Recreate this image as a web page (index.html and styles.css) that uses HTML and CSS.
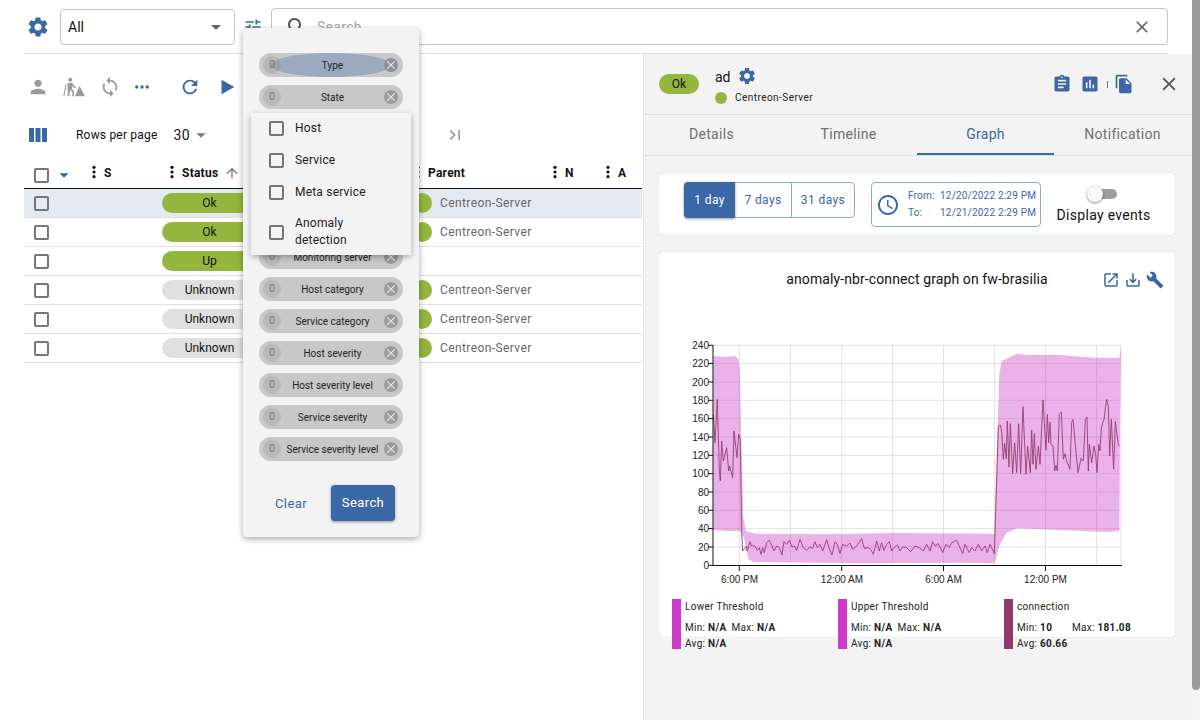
FILE: index.html
```html
<!DOCTYPE html>
<html lang="en">
<head>
  <meta charset="UTF-8">
  <title>Resources status</title>
  <link rel="stylesheet" href="styles.css">
</head>
<body>

<svg class="icon-defs" width="0" height="0">
  <defs>
    <symbol id="i-gear" viewBox="0 0 24 24"><path d="M19.14 12.94c.04-.3.06-.61.06-.94 0-.32-.02-.64-.07-.94l2.03-1.58c.18-.14.23-.41.12-.61l-1.92-3.32c-.12-.22-.37-.29-.59-.22l-2.39.96c-.5-.38-1.03-.7-1.62-.94l-.36-2.54c-.04-.24-.24-.41-.48-.41h-3.84c-.24 0-.43.17-.47.41l-.36 2.54c-.59.24-1.13.57-1.62.94l-2.39-.96c-.22-.08-.47 0-.59.22L2.74 8.87c-.12.21-.08.47.12.61l2.03 1.58c-.05.3-.09.63-.09.94s.02.64.07.94l-2.03 1.58c-.18.14-.23.41-.12.61l1.92 3.32c.12.22.37.29.59.22l2.39-.96c.5.38 1.03.7 1.62.94l.36 2.54c.05.24.24.41.48.41h3.84c.24 0 .44-.17.47-.41l.36-2.54c.59-.24 1.13-.56 1.62-.94l2.39.96c.22.08.47 0 .59-.22l1.92-3.32c.12-.22.07-.47-.12-.61l-2.01-1.58zM12 15.6c-1.98 0-3.6-1.62-3.6-3.6s1.62-3.6 3.6-3.6 3.6 1.62 3.6 3.6-1.62 3.6-3.6 3.6z"/></symbol>
    <symbol id="i-close" viewBox="0 0 24 24"><path d="M19 6.41L17.59 5 12 10.59 6.41 5 5 6.41 10.59 12 5 17.59 6.41 19 12 13.41 17.59 19 19 17.59 13.41 12z"/></symbol>
    <symbol id="i-more-vert" viewBox="0 0 24 24"><circle cx="12" cy="5" r="2.4"/><circle cx="12" cy="12" r="2.4"/><circle cx="12" cy="19" r="2.4"/></symbol>
    <symbol id="i-caret" viewBox="0 0 24 24"><path d="M7 10l5 5 5-5z"/></symbol>
  </defs>
</svg>

<div class="page">
  <div class="topbar">
    <svg class="icon gear-main"><use href="#i-gear"/></svg>
    <div class="filter-select">
      <span>All</span>
      <svg class="icon caret"><use href="#i-caret"/></svg>
    </div>
    <svg class="icon tune" viewBox="0 0 24 24"><path d="M3 17v2h6v-2H3zM3 5v2h10V5H3zm10 16v-2h8v-2h-8v-2h-2v6h2zM7 9v2H3v2h4v2h2V9H7zm14 4v-2H11v2h10zm-6-4h2V7h4V5h-4V3h-2v6z"/></svg>
    <div class="search-box">
      <svg class="icon search-icon" viewBox="0 0 24 24"><path d="M15.5 14h-.79l-.28-.27C15.41 12.59 16 11.11 16 9.5 16 5.91 13.09 3 9.5 3S3 5.91 3 9.5 5.91 16 9.5 16c1.61 0 3.09-.59 4.23-1.57l.27.28v.79l5 4.99L20.49 19l-4.99-5zm-6 0C7.01 14 5 11.99 5 9.5S7.01 5 9.5 5 14 7.01 14 9.5 11.99 14 9.5 14z"/></svg>
      <span class="search-text">Search</span>
      <svg class="icon search-clear"><use href="#i-close"/></svg>
    </div>
  </div>

  <div class="content">
    <div class="list">
      <div class="toolbar">
        <svg class="icon tool tool-person" viewBox="0 0 24 24"><path d="M12 12c2.21 0 4-1.79 4-4s-1.79-4-4-4-4 1.79-4 4 1.79 4 4 4zm0 2c-2.67 0-8 1.34-8 4v2h16v-2c0-2.66-5.33-4-8-4z"/></svg>
        <svg class="icon tool tool-road" viewBox="0 0 24 24"><circle cx="8" cy="4" r="2.2"/><path d="M5 8l5-.6 2.2 3.6 2 .8-.5 1.4-2.8-1-.9-1.4-.4 3 2.4 2.6V22h-1.8v-4.6L7.6 15 7 22H5.2zM3.8 9L1.5 22H.4L2.7 8.8zM18 10.5L24 22H13z"/></svg>
        <svg class="icon tool tool-sync" viewBox="0 0 24 24"><path d="M12 4V1L8 5l4 4V6c3.31 0 6 2.69 6 6 0 1.01-.25 1.97-.7 2.8l1.46 1.46C19.54 15.03 20 13.57 20 12c0-4.42-3.58-8-8-8zm0 14c-3.31 0-6-2.69-6-6 0-1.01.25-1.97.7-2.8L5.24 7.74C4.46 8.97 4 10.43 4 12c0 4.42 3.58 8 8 8v3l4-4-4-4v3z"/></svg>
        <svg class="icon tool tool-more" viewBox="0 0 24 24"><circle cx="5" cy="12" r="2.2"/><circle cx="12" cy="12" r="2.2"/><circle cx="19" cy="12" r="2.2"/></svg>
        <svg class="icon tool tool-refresh" viewBox="0 0 24 24"><path d="M17.65 6.35C16.2 4.9 14.21 4 12 4c-4.42 0-7.99 3.58-7.99 8s3.57 8 7.99 8c3.73 0 6.84-2.55 7.73-6h-2.08c-.82 2.33-3.04 4-5.65 4-3.31 0-6-2.69-6-6s2.69-6 6-6c1.66 0 3.14.69 4.22 1.78L13 11h7V4l-2.35 2.35z"/></svg>
        <svg class="icon tool tool-play" viewBox="0 0 24 24"><path d="M6 4v16l14-8z"/></svg>
      </div>

      <div class="pager">
        <svg class="icon columns-icon" viewBox="0 0 18 14"><path d="M0 0h5v14H0zM6.5 0h5v14h-5zM13 0h5v14h-5z"/></svg>
        <span class="rows-label">Rows per page</span>
        <span class="rows-value">30</span>
        <svg class="icon rows-caret"><use href="#i-caret"/></svg>
        <svg class="icon last-page" viewBox="0 0 24 24"><path d="M5.59 7.41L10.18 12l-4.59 4.59L7 18l6-6-6-6zM16 6h2v12h-2z"/></svg>
      </div>

      <div class="table">
        <div class="thead">
          <div class="cell cell-select">
            <span class="check"></span>
            <svg class="icon select-caret"><use href="#i-caret"/></svg>
          </div>
          <div class="cell th"><svg class="icon dots"><use href="#i-more-vert"/></svg>S</div>
          <div class="cell th th-status"><svg class="icon dots"><use href="#i-more-vert"/></svg>Status
            <svg class="icon sort-up" viewBox="0 0 24 24"><path d="M4 12l1.41 1.41L11 7.83V20h2V7.83l5.58 5.59L20 12l-8-8-8 8z"/></svg>
          </div>
          <div class="cell th th-right"><svg class="icon dots"><use href="#i-more-vert"/></svg>Parent</div>
          <div class="cell th th-right"><svg class="icon dots"><use href="#i-more-vert"/></svg>N</div>
          <div class="cell th th-right"><svg class="icon dots"><use href="#i-more-vert"/></svg>A</div>
        </div>

        <div class="row selected">
          <div class="cell"><span class="check"></span></div><div class="cell"></div>
          <div class="cell"><span class="status ok">Ok</span></div>
          <div class="cell parent"><i class="dot"></i>Centreon-Server</div><div class="cell"></div><div class="cell"></div>
        </div>
        <div class="row">
          <div class="cell"><span class="check"></span></div><div class="cell"></div>
          <div class="cell"><span class="status ok">Ok</span></div>
          <div class="cell parent"><i class="dot"></i>Centreon-Server</div><div class="cell"></div><div class="cell"></div>
        </div>
        <div class="row">
          <div class="cell"><span class="check"></span></div><div class="cell"></div>
          <div class="cell"><span class="status ok">Up</span></div>
          <div class="cell parent"></div><div class="cell"></div><div class="cell"></div>
        </div>
        <div class="row">
          <div class="cell"><span class="check"></span></div><div class="cell"></div>
          <div class="cell"><span class="status unknown">Unknown</span></div>
          <div class="cell parent"><i class="dot"></i>Centreon-Server</div><div class="cell"></div><div class="cell"></div>
        </div>
        <div class="row">
          <div class="cell"><span class="check"></span></div><div class="cell"></div>
          <div class="cell"><span class="status unknown">Unknown</span></div>
          <div class="cell parent"><i class="dot"></i>Centreon-Server</div><div class="cell"></div><div class="cell"></div>
        </div>
        <div class="row">
          <div class="cell"><span class="check"></span></div><div class="cell"></div>
          <div class="cell"><span class="status unknown">Unknown</span></div>
          <div class="cell parent"><i class="dot"></i>Centreon-Server</div><div class="cell"></div><div class="cell"></div>
        </div>
      </div>
    </div>

    <div class="panel">
      <div class="panel-header">
        <span class="panel-status">Ok</span>
        <div class="panel-title">
          <div class="panel-name">ad <svg class="icon panel-gear"><use href="#i-gear"/></svg></div>
          <div class="panel-parent"><i class="dot-small"></i>Centreon-Server</div>
        </div>
        <div class="panel-actions">
          <svg class="icon action" viewBox="0 0 24 24"><path d="M19 3h-4.18C14.4 1.84 13.3 1 12 1c-1.3 0-2.4.84-2.82 2H5c-1.1 0-2 .9-2 2v14c0 1.1.9 2 2 2h14c1.1 0 2-.9 2-2V5c0-1.1-.9-2-2-2zm-7 0c.55 0 1 .45 1 1s-.45 1-1 1-1-.45-1-1 .45-1 1-1zm2 14H7v-2h7v2zm3-4H7v-2h10v2zm0-4H7V7h10v2z"/></svg>
          <svg class="icon action" viewBox="0 0 24 24"><path d="M19 3H5c-1.1 0-2 .9-2 2v14c0 1.1.9 2 2 2h14c1.1 0 2-.9 2-2V5c0-1.1-.9-2-2-2zM9 17H7v-7h2v7zm4 0h-2V7h2v10zm4 0h-2v-4h2v4z"/></svg>
          <span class="action-sep"></span>
          <svg class="icon action" viewBox="0 0 24 24"><path d="M16 1H4c-1.1 0-2 .9-2 2v14h2V3h12V1zm-1 4l6 6v10c0 1.1-.9 2-2 2H7.99C6.89 23 6 22.1 6 21l.01-14c0-1.1.89-2 1.99-2h7zm-1 7h5.5L14 6.5V12z"/></svg>
        </div>
        <svg class="icon panel-close"><use href="#i-close"/></svg>
      </div>

      <div class="tabs">
        <div class="tab">Details</div>
        <div class="tab">Timeline</div>
        <div class="tab active">Graph</div>
        <div class="tab">Notification</div>
      </div>

      <div class="panel-body">
        <div class="card time-card">
          <div class="periods">
            <span class="period active">1 day</span>
            <span class="period period-7">7 days</span>
            <span class="period period-31">31 days</span>
          </div>
          <div class="range">
            <svg class="icon clock" viewBox="0 0 24 24"><path d="M11.99 2C6.47 2 2 6.48 2 12s4.47 10 9.99 10C17.52 22 22 17.52 22 12S17.52 2 11.99 2zM12 20c-4.42 0-8-3.58-8-8s3.58-8 8-8 8 3.58 8 8-3.58 8-8 8zm.5-13H11v6l5.25 3.15.75-1.23-4.5-2.67z"/></svg>
            <div class="range-grid">
              <span>From:</span><span>12/20/2022 2:29 PM</span>
              <span>To:</span><span>12/21/2022 2:29 PM</span>
            </div>
          </div>
          <div class="events">
            <span class="switch"><i class="switch-knob"></i></span>
            <span class="events-label">Display events</span>
          </div>
        </div>

        <div class="card graph-card">
          <div class="graph-head">
            <span class="graph-title">anomaly-nbr-connect graph on fw-brasilia</span>
            <div class="graph-actions">
              <svg class="icon graph-action" viewBox="0 0 24 24"><path d="M19 19H5V5h7V3H5c-1.11 0-2 .9-2 2v14c0 1.1.89 2 2 2h14c1.1 0 2-.9 2-2v-7h-2v7zM14 3v2h3.59l-9.83 9.83 1.41 1.41L19 6.41V10h2V3h-7z"/></svg>
              <svg class="icon graph-action" viewBox="0 0 24 24"><path d="M19 12v7H5v-7H3v7c0 1.1.9 2 2 2h14c1.1 0 2-.9 2-2v-7h-2zm-6 .67l2.59-2.58L17 11.5l-5 5-5-5 1.41-1.41L11 12.67V3h2z"/></svg>
              <svg class="icon graph-action" viewBox="0 0 24 24"><path d="M22.7 19l-9.1-9.1c.9-2.3.4-5-1.5-6.9-2-2-5-2.4-7.4-1.3L9 6 6 9 1.6 4.7C.4 7.1.9 10.1 2.9 12.1c1.9 1.9 4.6 2.4 6.9 1.5l9.1 9.1c.4.4 1 .4 1.4 0l2.3-2.3c.5-.4.5-1.1.1-1.4z"/></svg>
            </div>
          </div>

          <svg class="chart" width="516" height="264" viewBox="659 330 516 264">
            <path class="grid" d="M713 344.3H1121M713 362.6H1121M713 381H1121M713 399.3H1121M713 417.6H1121M713 436H1121M713 454.3H1121M713 472.6H1121M713 491H1121M713 509.3H1121M713 527.6H1121M713 546H1121M739.3 344V564M790.5 344V564M841.7 344V564M892.6 344V564M943.5 344V564M994.7 344V564M1045.5 344V564M1096.6 344V564M1121 344V564"/>
            <g transform="translate(660 330) scale(.33333)">
              <polygon class="band" points="160,75 200,78 225,75 235,85 240,130 243,300 250,560 258,600 285,608 500,610 700,606 1003,608 1018,130 1025,90 1045,82 1070,68 1100,72 1200,72 1300,80 1378,80 1383,45 1380,300 1378,600 1340,603 1200,597 1070,592 1040,605 1020,640 1003,697 900,695 600,697 280,693 265,685 252,620 240,600 200,600 160,597"/>
              <polyline class="line" points="160,250 165,335 172,205 178,420 181,450 185,330 190,390 200,350 206,420 209,405 218,440 222,300 231,380 236,310 241,325 245,600 248,660 255,650 258,645 262,660 270,632 275,645 285,645 292,658 298,650 303,670 308,650 313,665 320,635 328,628 336,645 342,660 350,645 358,650 366,672 372,632 380,640 388,628 396,648 403,645 410,658 420,625 430,650 440,658 450,648 458,652 465,632 472,650 480,640 488,660 500,626 507,650 516,672 525,632 532,640 540,668 548,640 560,645 570,636 578,655 590,645 605,623 613,652 625,650 632,655 640,670 650,630 658,660 665,635 672,658 680,640 688,632 695,660 702,650 712,642 720,660 728,648 740,650 752,662 765,645 778,650 790,660 800,640 810,660 818,632 825,645 835,638 848,665 858,640 868,650 875,635 890,628 900,650 908,668 915,640 928,665 935,650 945,660 955,640 965,660 975,645 982,665 990,640 1003,668 1015,285 1021,282 1025,300 1030,385 1034,337 1039,383 1042,270 1047,408 1051,278 1058,428 1064,335 1070,425 1076,278 1082,428 1089,227 1098,430 1103,345 1111,425 1115,297 1119,400 1123,308 1128,415 1135,345 1140,400 1149,207 1158,358 1162,250 1166,335 1170,273 1173,340 1179,345 1184,420 1188,403 1192,420 1198,250 1204,243 1210,385 1215,368 1220,390 1230,415 1235,275 1239,265 1245,330 1254,425 1263,382 1270,390 1276,265 1281,258 1285,420 1288,340 1295,395 1302,345 1307,370 1311,425 1316,340 1320,360 1324,290 1332,265 1340,205 1345,225 1349,375 1354,265 1361,415 1366,272 1375,342 1379,345"/>
            </g>
            <path class="axis" d="M713 344V564.500H1122M708 344.3H713M708 362.6H713M708 381H713M708 399.3H713M708 417.6H713M708 436H713M708 454.3H713M708 472.6H713M708 491H713M708 509.3H713M708 527.6H713M708 546H713M708 564.3H713M739.3 564V570M841.7 564V570M943.5 564V570M1045.5 564V570"/>
            <g class="y-labels">
              <text x="709" y="348">240</text><text x="709" y="366.3">220</text><text x="709" y="384.7">200</text><text x="709" y="403">180</text><text x="709" y="421.3">160</text><text x="709" y="439.7">140</text><text x="709" y="458">120</text><text x="709" y="476.3">100</text><text x="709" y="494.7">80</text><text x="709" y="513">60</text><text x="709" y="531.3">40</text><text x="709" y="549.7">20</text><text x="709" y="568">0</text>
            </g>
            <g class="x-labels">
              <text x="739.5" y="582">6:00 PM</text><text x="842" y="582">12:00 AM</text><text x="943.5" y="582">6:00 AM</text><text x="1045.5" y="582">12:00 PM</text>
            </g>
          </svg>

          <div class="legend">
            <div class="legend-item">
              <span class="swatch swatch-threshold"></span>
              <div class="legend-text">
                <div class="legend-name">Lower Threshold</div>
                <div class="legend-stats"><span>Min: <b>N/A</b></span><span>Max: <b>N/A</b></span></div>
                <div class="legend-stats"><span>Avg: <b>N/A</b></span></div>
              </div>
            </div>
            <div class="legend-item">
              <span class="swatch swatch-threshold"></span>
              <div class="legend-text">
                <div class="legend-name">Upper Threshold</div>
                <div class="legend-stats"><span>Min: <b>N/A</b></span><span>Max: <b>N/A</b></span></div>
                <div class="legend-stats"><span>Avg: <b>N/A</b></span></div>
              </div>
            </div>
            <div class="legend-item">
              <span class="swatch swatch-metric"></span>
              <div class="legend-text">
                <div class="legend-name">connection</div>
                <div class="legend-stats"><span class="stat-wide">Min: <b>10</b></span><span>Max: <b>181.08</b></span></div>
                <div class="legend-stats"><span>Avg: <b>60.66</b></span></div>
              </div>
            </div>
          </div>
        </div>
      </div>
    </div>
  </div>
</div>

<div class="scrollbar"><div class="scroll-thumb"></div></div>

<!-- Filter popover, lies over the list -->
<div class="popover">
  <div class="chips">
    <div class="chip chip-focus"><span class="chip-count">0</span><span class="chip-label">Type</span><span class="chip-del"><svg class="icon"><use href="#i-close"/></svg></span></div>
    <div class="chip"><span class="chip-count">0</span><span class="chip-label">State</span><span class="chip-del"><svg class="icon"><use href="#i-close"/></svg></span></div>
    <!-- these four sit under the open type menu -->
    <div class="chip"></div>
    <div class="chip"></div>
    <div class="chip"></div>
    <div class="chip"></div>
    <div class="chip"><span class="chip-count">0</span><span class="chip-label">Monitoring server</span><span class="chip-del"><svg class="icon"><use href="#i-close"/></svg></span></div>
    <div class="chip"><span class="chip-count">0</span><span class="chip-label">Host category</span><span class="chip-del"><svg class="icon"><use href="#i-close"/></svg></span></div>
    <div class="chip"><span class="chip-count">0</span><span class="chip-label">Service category</span><span class="chip-del"><svg class="icon"><use href="#i-close"/></svg></span></div>
    <div class="chip"><span class="chip-count">0</span><span class="chip-label">Host severity</span><span class="chip-del"><svg class="icon"><use href="#i-close"/></svg></span></div>
    <div class="chip"><span class="chip-count">0</span><span class="chip-label">Host severity level</span><span class="chip-del"><svg class="icon"><use href="#i-close"/></svg></span></div>
    <div class="chip"><span class="chip-count">0</span><span class="chip-label">Service severity</span><span class="chip-del"><svg class="icon"><use href="#i-close"/></svg></span></div>
    <div class="chip"><span class="chip-count">0</span><span class="chip-label">Service severity level</span><span class="chip-del"><svg class="icon"><use href="#i-close"/></svg></span></div>
  </div>
  <div class="popover-actions">
    <span class="btn-clear">Clear</span>
    <span class="btn-search">Search</span>
  </div>

  <div class="type-menu">
    <div class="menu-item"><span class="check"></span>Host</div>
    <div class="menu-item"><span class="check"></span>Service</div>
    <div class="menu-item"><span class="check"></span>Meta service</div>
    <div class="menu-item menu-item-tall"><span class="check"></span><span class="menu-wrap">Anomaly detection</span></div>
  </div>
</div>

</body>
</html>
```

FILE: styles.css
```css
body {
  margin: 0;
  width: 1200px;
  height: 720px;
  overflow: hidden;
  background-color: #fff;
  font-family: Roboto, 'Liberation Sans', sans-serif;
  color: #111;
  position: relative;
}

.icon-defs {
  position: absolute;
}

.icon {
  display: block;
  fill: currentColor;
  flex: none;
}

.page {
  width: 1192px;
  height: 720px;
  display: flex;
  flex-direction: column;
}

/* Top filter bar */
.topbar {
  height: 54px;
  margin-left: 24px;
  margin-right: 24px;
  display: flex;
  align-items: center;
  box-sizing: border-box;
  border-bottom: 1px solid #e0e0e0;
}

.gear-main {
  width: 24px;
  height: 24px;
  margin-left: 2px;
  color: #3a67a5;
}

.filter-select {
  width: 175px;
  height: 36px;
  margin-left: 10px;
  padding: 0 7px;
  box-sizing: border-box;
  border: 1px solid #c4c4c4;
  border-radius: 4px;
  display: flex;
  align-items: center;
  justify-content: space-between;
  font-size: 14px;
}

.caret {
  width: 24px;
  height: 24px;
  color: #666;
  margin-right: -1px;
}

.tune {
  width: 20px;
  height: 20px;
  margin-left: 8px;
  color: #3a67a5;
}

.search-box {
  width: 897px;
  height: 37px;
  margin-left: 8px;
  box-sizing: border-box;
  border: 1px solid #c4c4c4;
  border-radius: 4px;
  display: flex;
  align-items: center;
  font-size: 14px;
  color: #a8a8a8;
}

.search-icon {
  width: 24px;
  height: 24px;
  margin-left: 13px;
  color: #555;
}

.search-text {
  margin-left: 8px;
  letter-spacing: .3px;
}

.search-clear {
  width: 20px;
  height: 20px;
  margin-left: auto;
  margin-right: 15px;
  color: #666;
}

.content {
  flex: 1;
  display: flex;
  min-height: 0;
}

/* Resources list */
.list {
  width: 643px;
  padding-left: 24px;
  box-sizing: border-box;
}

.toolbar {
  height: 66px;
  display: flex;
  align-items: center;
}

.tool {
  width: 22px;
  height: 22px;
  color: #9b9b9b;
}

.tool-person { margin-left: 3px; }
.tool-road { margin-left: 14px; }
.tool-sync { margin-left: 14px; }
.tool-more { margin-left: 12px; width: 18px; height: 18px; color: #3a67a5; }
.tool-refresh { margin-left: 28px; color: #3a67a5; }
.tool-play { margin-left: 15px; color: #3a67a5; }

.pager {
  height: 30px;
  display: flex;
  align-items: center;
}

.columns-icon {
  width: 18px;
  height: 14px;
  margin-left: 5px;
  color: #3a67a5;
}

.rows-label {
  margin-left: 29px;
  font-size: 12px;
  letter-spacing: .2px;
}

.rows-value {
  margin-left: 16px;
  font-size: 14px;
  letter-spacing: .4px;
}

.rows-caret {
  width: 22px;
  height: 22px;
  margin-left: 0;
  color: #777;
}

.last-page {
  width: 20px;
  height: 20px;
  margin-left: 233px;
  color: #999;
}

.table {
  margin-top: 10px;
  width: 618px;
}

.thead,
.row {
  display: grid;
  grid-template-columns: 66px 72px 250px 137px 53px 40px;
  align-items: center;
}

.thead {
  height: 29px;
  box-sizing: border-box;
  border-bottom: 1px solid #111;
}

.row {
  height: 29px;
  box-sizing: border-box;
  border-bottom: 1px solid #e0e0e0;
}

.row.selected {
  background-color: #e4eaf2;
}

.cell {
  display: flex;
  align-items: center;
  min-width: 0;
}

.cell-select {
  padding-top: 2px;
}

.th {
  padding-bottom: 2px;
  font-size: 12px;
  font-weight: bold;
  letter-spacing: .25px;
}

.th-status {
  padding-left: 6px;
}

.th-right {
  padding-left: 2px;
}

.dots {
  width: 16px;
  height: 16px;
  margin-left: -4px;
  margin-right: 2px;
  margin-top: -2px;
}

.check {
  display: block;
  flex: none;
  width: 15px;
  height: 15px;
  box-sizing: border-box;
  border: 2px solid #767676;
  border-radius: 2px;
  margin-left: 10px;
}

.select-caret {
  width: 22px;
  height: 22px;
  margin-left: 4px;
  color: #3a67a5;
}

.sort-up {
  width: 16px;
  height: 16px;
  margin-left: 6px;
  color: #777;
}

.status {
  display: block;
  width: 95px;
  height: 20px;
  line-height: 20px;
  border-radius: 10px;
  font-size: 12px;
  text-align: center;
}

.status.ok {
  background-color: #94b53e;
}

.status.unknown {
  background-color: #e0e0e0;
}

.parent {
  font-size: 12px;
  letter-spacing: .4px;
  color: #666;
}

.dot {
  width: 20px;
  height: 20px;
  border-radius: 50%;
  background-color: #94b53e;
  margin-right: 8px;
}

/* Details panel */
.panel {
  width: 549px;
  height: 666px;
  box-sizing: border-box;
  background-color: #f3f3f3;
  border-left: 1px solid #e5e5e5;
}

.panel-header {
  height: 61px;
  box-sizing: border-box;
  padding: 0 12px 0 15px;
  border-bottom: 1px solid #dedede;
  display: flex;
  align-items: center;
}

.panel-status {
  width: 40px;
  height: 20px;
  line-height: 20px;
  border-radius: 10px;
  background-color: #94b53e;
  font-size: 12px;
  text-align: center;
}

.panel-title {
  margin-left: 16px;
  margin-top: 2px;
}

.panel-name {
  display: flex;
  align-items: center;
  font-size: 14px;
  height: 20px;
}

.panel-gear {
  width: 20px;
  height: 20px;
  margin-left: 6px;
  margin-top: -2px;
  color: #3a67a5;
}

.panel-parent {
  display: flex;
  align-items: center;
  margin-top: 5px;
  font-size: 10px;
  letter-spacing: .45px;
  color: #222;
}

.dot-small {
  width: 12px;
  height: 12px;
  border-radius: 50%;
  background-color: #94b53e;
  margin-right: 8px;
}

.panel-actions {
  margin-left: auto;
  display: flex;
  align-items: center;
  margin-right: 24px;
  color: #3a67a5;
}

.action {
  width: 20px;
  height: 20px;
  margin-left: 8px;
}

.action-sep {
  width: 1px;
  height: 7px;
  margin: 0 -2px 0 7px;
  background-color: #777;
}

.panel-close {
  width: 22px;
  height: 22px;
  color: #555;
}

.tabs {
  height: 41px;
  margin-left: -1px;
  box-sizing: border-box;
  display: grid;
  grid-template-columns: repeat(4, 137px);
  border-bottom: 1px solid #dedede;
}

.tab {
  text-align: center;
  font-size: 14px;
  letter-spacing: .3px;
  line-height: 38px;
  color: #6f6f6f;
}

.tab.active {
  color: #3a67a5;
  height: 40px;
  box-sizing: border-box;
  border-bottom: 2px solid #3a67a5;
}

.panel-body {
  padding: 17px 17px 0 15px;
}

.card {
  background-color: #fff;
  border-radius: 4px;
  box-shadow: 0 0 1px rgba(0, 0, 0, .25);
}

.time-card {
  height: 62px;
  padding: 9px 0 0 25px;
  box-sizing: border-box;
  display: flex;
  align-items: flex-start;
}

.periods {
  display: flex;
  height: 36px;
  box-sizing: border-box;
  border: 1px solid #8fa8cc;
  border-radius: 4px;
  font-size: 12px;
  letter-spacing: .4px;
  color: #3a67a5;
  line-height: 34px;
}

.period {
  text-align: center;
}

.period.active {
  width: 51px;
  margin: -1px 0 -1px -1px;
  line-height: 36px;
  background-color: #3a67a5;
  color: #fff;
  border-radius: 4px 0 0 4px;
  box-shadow: 0 1px 3px rgba(0, 0, 0, .4);
}

.period-7 {
  width: 56px;
}

.period-31 {
  width: 62px;
  border-left: 1px solid #8fa8cc;
}

.range {
  width: 170px;
  height: 45px;
  margin-left: 16px;
  box-sizing: border-box;
  border: 1px solid #8fa8cc;
  border-radius: 4px;
  display: flex;
  align-items: center;
  color: #3a67a5;
}

.clock {
  width: 24px;
  height: 24px;
  margin-left: 4px;
}

.range-grid {
  display: grid;
  grid-template-columns: 32px auto;
  row-gap: 3px;
  margin-left: 8px;
  font-size: 10px;
  letter-spacing: .2px;
  line-height: 14px;
  white-space: nowrap;
}

.events {
  margin-left: 16px;
  width: 93px;
  display: flex;
  flex-direction: column;
  align-items: center;
}

.switch {
  display: block;
  position: relative;
  width: 26px;
  height: 10px;
  margin-top: 7px;
  margin-right: 0;
  border-radius: 5px;
  background-color: #9e9e9e;
}

.switch-knob {
  position: absolute;
  left: -4px;
  top: -3px;
  width: 16px;
  height: 16px;
  border-radius: 50%;
  background-color: #fafafa;
  box-shadow: 0 1px 3px rgba(0, 0, 0, .45);
}

.events-label {
  margin-top: 8px;
  font-size: 14px;
  letter-spacing: .3px;
  white-space: nowrap;
}

.graph-card {
  height: 385px;
  margin-top: 17px;
}

.graph-head {
  height: 54px;
  display: flex;
  align-items: center;
  position: relative;
  justify-content: center;
}

.graph-title {
  font-size: 14px;
  letter-spacing: .1px;
}

.graph-actions {
  position: absolute;
  right: 11px;
  top: 19px;
  display: flex;
  gap: 4px;
  color: #3a67a5;
}

.graph-action {
  width: 18px;
  height: 18px;
}

.chart {
  display: block;
  margin-top: 25px;
}

.grid {
  fill: none;
  stroke: #e2e2e2;
  stroke-width: 1;
}

.band {
  fill: #cc3cc9;
  fill-opacity: .4;
}

.line {
  fill: none;
  stroke: #8f3a68;
  stroke-opacity: .85;
  stroke-width: 3;
}

.axis {
  fill: none;
  stroke: #111;
  stroke-width: 1;
}

.y-labels text,
.x-labels text {
  font-family: 'Liberation Sans', sans-serif;
  font-size: 10px;
  fill: #222;
}

.y-labels text {
  text-anchor: end;
}

.x-labels text {
  text-anchor: middle;
}

.legend {
  display: grid;
  grid-template-columns: repeat(3, 166px);
  margin-top: 4px;
  padding-left: 13px;
}

.legend-item {
  display: flex;
}

.swatch {
  width: 9px;
  height: 50px;
}

.swatch-threshold {
  background-color: #cc3cc9;
}

.swatch-metric {
  background-color: #8f3a68;
}

.legend-text {
  margin-left: 4px;
  font-size: 10px;
  letter-spacing: .3px;
  color: #222;
}

.legend-name {
  height: 21px;
  line-height: 16px;
}

.legend-stats {
  display: flex;
  gap: 5px;
  height: 16px;
  line-height: 16px;
}

.stat-wide {
  width: 50px;
}

/* Scrollbar */
.scrollbar {
  position: absolute;
  right: 0;
  top: 0;
  width: 8px;
  height: 720px;
  background-color: #f5f5f5;
}

.scroll-thumb {
  height: 690px;
  background-color: #9a9a9a;
  border-radius: 0 0 4px 4px;
}

/* Filter popover */
.popover {
  position: absolute;
  left: 243px;
  top: 28px;
  width: 176px;
  height: 509px;
  box-sizing: border-box;
  padding: 25px 16px 0;
  background-color: #f3f3f3;
  border-radius: 4px;
  box-shadow: 0 2px 6px rgba(0, 0, 0, .35);
}

.chips {
  display: flex;
  flex-direction: column;
  gap: 8px;
}

.chip {
  position: relative;
  height: 24px;
  border-radius: 12px;
  background-color: #c8c8c8;
  display: flex;
  align-items: center;
  overflow: hidden;
}

.chip-focus::before {
  content: '';
  position: absolute;
  left: 12px;
  right: 12px;
  top: 0;
  bottom: 0;
  border-radius: 50%;
  background-color: #9caabf;
}

.chip-count {
  position: relative;
  width: 18px;
  height: 18px;
  margin-left: 4px;
  line-height: 18px;
  border-radius: 50%;
  background-color: #b9b9b9;
  font-size: 10px;
  text-align: center;
  color: #777;
  flex: none;
}

.chip-focus .chip-count {
  background-color: rgba(150, 150, 150, .35);
}

.chip-label {
  position: relative;
  flex: 1;
  min-width: 0;
  font-size: 10px;
  text-align: center;
  white-space: nowrap;
  color: #222;
}

.chip-del {
  position: relative;
  flex: none;
  width: 14px;
  height: 14px;
  margin-right: 5px;
  border-radius: 50%;
  background-color: #9a9a9a;
  color: #e8e8e8;
}

.chip-focus .chip-del {
  background-color: #8b8f97;
}

.chip-del .icon {
  width: 14px;
  height: 14px;
}

.popover-actions {
  margin-top: 24px;
  display: flex;
  align-items: center;
  font-size: 13px;
  letter-spacing: .4px;
}

.btn-clear {
  margin-left: 16px;
  color: #3a67a5;
}

.btn-search {
  margin-left: 24px;
  width: 64px;
  height: 36px;
  line-height: 36px;
  text-align: center;
  border-radius: 4px;
  background-color: #3a67a5;
  color: #fff;
  box-shadow: 0 1px 3px rgba(0, 0, 0, .4);
}

.type-menu {
  position: absolute;
  left: 8px;
  top: 85px;
  width: 160px;
  height: 142px;
  box-sizing: border-box;
  background-color: #f3f3f3;
  box-shadow: 0 2px 6px rgba(0, 0, 0, .3);
  font-size: 12px;
  color: #222;
}

.menu-item {
  height: 32px;
  display: flex;
  align-items: center;
  letter-spacing: .2px;
}

.menu-item:first-child {
  margin-top: -1px;
}

.menu-item .check {
  margin-left: 18px;
  margin-right: 11px;
}

.menu-item-tall {
  height: 48px;
}

.menu-wrap {
  width: 70px;
  line-height: 17px;
}
```
